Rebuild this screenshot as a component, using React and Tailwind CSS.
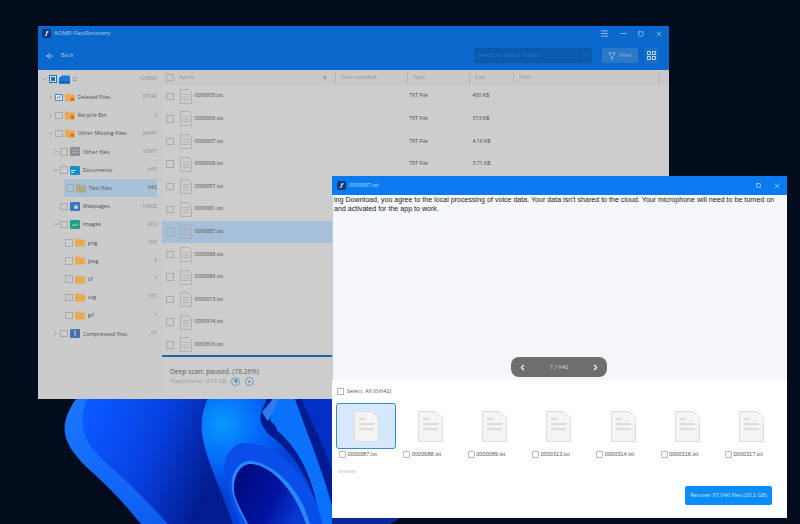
import React from 'react';
import { ArrowLeft, ChevronDown, ChevronLeft, ChevronRight, Menu, Minus, Pause, Play, Search, Square, X, Filter, ArrowUp } from 'lucide-react';

const treeRows = [
  { label: 'C:', count: '123990', depth: 0, open: true, box: 'partial', icon: 'drive' },
  { label: 'Deleted Files', count: '97040', depth: 1, open: false, box: 'checked', icon: 'orange' },
  { label: 'Recycle Bin', count: '3', depth: 1, open: false, icon: 'recycle' },
  { label: 'Other Missing Files', count: '26947', depth: 1, open: true, icon: 'orange' },
  { label: 'Other files', count: '10967', depth: 2, open: false, icon: 'gray' },
  { label: 'Documents', count: '643', depth: 2, open: true, icon: 'docs' },
  { label: 'Text files', count: '642', depth: 3, selected: true, icon: 'tan' },
  { label: 'Webpages', count: '14902', depth: 2, icon: 'web' },
  { label: 'Images', count: '472', depth: 2, open: true, icon: 'images' },
  { label: 'png', count: '363', depth: 3, icon: 'folder' },
  { label: 'jpeg', count: '6', depth: 3, icon: 'folder' },
  { label: 'tif', count: '1', depth: 3, icon: 'folder' },
  { label: 'svg', count: '101', depth: 3, icon: 'folder' },
  { label: 'gif', count: '1', depth: 3, icon: 'folder' },
  { label: 'Compressed files', count: '61', depth: 2, open: false, icon: 'zip' },
];

const fileRows = [
  { name: '0000005.txt', type: 'TXT File', size: '450 KB' },
  { name: '0000006.txt', type: 'TXT File', size: '313 KB' },
  { name: '0000007.txt', type: 'TXT File', size: '4.16 KB' },
  { name: '0000008.txt', type: 'TXT File', size: '3.71 KB' },
  { name: '0000057.txt' },
  { name: '0000081.txt' },
  { name: '0000087.txt', selected: true },
  { name: '0000088.txt' },
  { name: '0000089.txt' },
  { name: '0000313.txt' },
  { name: '0000314.txt' },
  { name: '0000316.txt' },
];

const thumbs = ['0000087.txt', '0000088.txt', '0000089.txt', '0000313.txt', '0000314.txt', '0000316.txt', '0000317.txt'];

function Wallpaper() {
  return (
    <svg className="absolute inset-0" width="800" height="524" viewBox="0 0 800 524">
      <defs>
        <linearGradient id="outer" x1="0" y1="0" x2="1" y2="1">
          <stop offset="0" stopColor="#1a78ff" />
          <stop offset="1" stopColor="#0a50e8" />
        </linearGradient>
        <linearGradient id="petal" gradientUnits="userSpaceOnUse" x1="90" y1="420" x2="215" y2="470">
          <stop offset="0" stopColor="#0a58ff" />
          <stop offset="0.5" stopColor="#0840e0" />
          <stop offset="1" stopColor="#021c90" />
        </linearGradient>
        <radialGradient id="fold" gradientUnits="userSpaceOnUse" cx="222" cy="424" r="70">
          <stop offset="0" stopColor="#0a98ff" />
          <stop offset="0.55" stopColor="#0568f8" />
          <stop offset="1" stopColor="#0440d8" />
        </radialGradient>
        <linearGradient id="inner" gradientUnits="userSpaceOnUse" x1="236" y1="480" x2="300" y2="510">
          <stop offset="0" stopColor="#000a80" />
          <stop offset="0.6" stopColor="#0214a0" />
          <stop offset="1" stopColor="#0838d0" />
        </linearGradient>
      </defs>
      <path d="M78 396 C68 410 63 422 65 434 C67 446 78 460 92 472 C112 490 128 508 141 524 L332 524 L332 396 Z" fill="url(#outer)" />
      <path d="M88 396 C83 408 81 420 84 432 C88 446 100 458 114 470 C134 488 152 506 168 524 L332 524 L332 396 Z" fill="url(#petal)" />
      <path d="M300 396 L332 396 L332 470 C322 440 310 420 300 396 Z" fill="#0230c4" />
      <path d="M272 396 L294 396 C304 426 320 462 332 506 L332 524 L320 524 C314 470 292 440 270 425 Z" fill="#0a72fa" />
      <path d="M209 396 C203 408 201 420 202 432 C204 456 224 496 233 524 L322 524 C312 480 292 450 268 434 C262 426 258 420 262 410 L268 396 Z" fill="url(#fold)" />
      <path d="M262 412 L274 398 L278 400 L268 422 Z" fill="#2f7cf0" />
      <path d="M261 418 C263 426 268 431 273 437 L277 429 C274 423 270 420 267 420 Z" fill="#02188c" />
      <path d="M224 470 C224 456 232 444 244 443 C268 442 296 462 310 490 C316 502 320 514 323 524 L240 524 C232 504 226 486 224 470 Z" fill="#0a4eea" />
      <path d="M232 490 C230 474 238 461 250 461 C270 462 292 482 303 505 C306 512 308 518 310 524 L246 524 C240 512 234 502 232 490 Z" fill="#2a88ff" />
      <path d="M234 492 C233 476 240 464 251 464 C268 465 288 484 299 507 C302 513 304 519 306 524 L248 524 C242 512 236 502 234 492 Z" fill="url(#inner)" />
      <path d="M332 518 L400 518 L390 524 L332 524 Z" fill="#062a9a" />
    </svg>
  );
}

function Box({ state, className = '' }) {
  if (state === 'checked') {
    return (
      <span className={`flex h-[7.5px] w-[7.5px] shrink-0 items-center justify-center border border-[#4f8fc4] bg-[#dbe6ef] ${className}`}>
        <svg width="6" height="6" viewBox="0 0 6 6"><path d="M1 3l1.4 1.4L5 1.6" fill="none" stroke="#2f6fa8" strokeWidth="1" /></svg>
      </span>
    );
  }
  if (state === 'partial') {
    return (
      <span className={`flex h-[7.5px] w-[7.5px] shrink-0 items-center justify-center border border-[#1f74b8] bg-[#dbe6ef] ${className}`}>
        <span className="block h-[4.5px] w-[4.5px] bg-[#1a6cb0]" />
      </span>
    );
  }
  return <span className={`block h-[7.5px] w-[7.5px] shrink-0 border border-[#a9a9a9] ${className}`} />;
}

function TreeIcon({ kind }) {
  if (kind === 'drive') {
    return (
      <svg width="11" height="9" viewBox="0 0 11 9" className="shrink-0">
        <path d="M0 8.5V3L3 .5h6.5c.8 0 1.5.7 1.5 1.5v6.5Z" fill="#1a7ad8" />
        <rect x="0" y="6.5" width="11" height="2" fill="#0f5eb4" />
      </svg>
    );
  }
  if (kind === 'gray' || kind === 'docs' || kind === 'web' || kind === 'images' || kind === 'zip') {
    const fills = { gray: '#8b8f96', docs: '#1790c8', web: '#3a78c4', images: '#1ba083', zip: '#4b70a8' };
    return (
      <svg width="10" height="9" viewBox="0 0 10 9" className="shrink-0">
        <rect width="10" height="9" rx="1" fill={fills[kind]} />
        {kind === 'gray' && <path d="M1.5 3h7M1.5 5.5h7" stroke="#b6b8bc" strokeWidth=".8" />}
        {kind === 'docs' && <path d="M1 4.5h4.5M1 6.5h3" stroke="#e6f4fa" strokeWidth=".9" />}
        {kind === 'web' && <circle cx="6" cy="5" r="2" fill="#b9d2ee" />}
        {kind === 'images' && <path d="M2 6.5l1.5-2 1.5 1.3L7 3.5l1 1.5" fill="none" stroke="#e2f5ef" strokeWidth=".7" />}
        {kind === 'zip' && <path d="M5 1v6" stroke="#b9c8de" strokeWidth="1.2" />}
      </svg>
    );
  }
  return (
    <svg width="10" height="9" viewBox="0 0 10 9" className="shrink-0">
      <path d="M0 1.2C0 .7.4.4.8.4h2.6l1 1H9.2c.5 0 .8.3.8.8v5.6c0 .5-.3.8-.8.8H.8C.4 8.6 0 8.3 0 7.8Z" fill={kind === 'tan' ? '#b0a888' : '#e9a94f'} />
      {(kind === 'orange' || kind === 'recycle') && <rect x="5.5" y="4.5" width="3.5" height="3.5" rx="1.5" fill="#d9692c" />}
    </svg>
  );
}

function TreeRow({ row }) {
  const indent = { 0: 'pl-[3px]', 1: 'pl-[9px]', 2: 'pl-[14px]', 3: 'pl-[18px]' };
  return (
    <div className={`flex h-[18.2px] items-center pr-[5px] ${indent[row.depth]}`}>
      {row.depth === 3 ? (
        <span className="w-[8px] shrink-0" />
      ) : row.open ? (
        <ChevronDown size={7} strokeWidth={2} className="w-[7px] shrink-0 text-[#808080]" />
      ) : row.open === false ? (
        <ChevronRight size={7} strokeWidth={2} className="w-[7px] shrink-0 text-[#808080]" />
      ) : (
        <span className="w-[7px] shrink-0" />
      )}
      <div className={`flex h-[18.2px] min-w-0 flex-1 items-center ${row.selected ? 'bg-[#a9c1d8]' : ''}`}>
        <Box state={row.box} className={row.selected ? 'ml-[2px] border-[#7fa2c2]' : 'ml-[1px]'} />
        <span className="ml-[2px]"><TreeIcon kind={row.icon} /></span>
        <span className="ml-[3px] flex-1 truncate font-['Open_Sans',sans-serif] text-[5.6px] text-[#4d5156]">{row.label}</span>
        <span className={`font-['Open_Sans',sans-serif] text-[5.2px] ${row.selected ? 'text-[#555]' : 'text-[#8b8b8b]'}`}>{row.count}</span>
      </div>
    </div>
  );
}

function FileIcon() {
  return (
    <svg width="12" height="15" viewBox="0 0 12 15" className="shrink-0">
      <path d="M.5.5h8l3 3v11H.5Z" fill="none" stroke="#a8a8a8" strokeWidth=".8" />
      <path d="M2.5 5.5h7M2.5 8h7M2.5 10.5h7" stroke="#a8a8a8" strokeWidth=".7" />
    </svg>
  );
}

function FileRow({ row }) {
  return (
    <div className={`flex h-[22.6px] items-center font-['Open_Sans',sans-serif] text-[5.2px] text-[#484848] ${row.selected ? 'bg-[#a5bfd8]' : ''}`}>
      <Box className={row.selected ? 'ml-[4px] border-[#4f7ea8]' : 'ml-[4px]'} />
      <span className="ml-[6px]"><FileIcon /></span>
      <span className="ml-[3px] w-[215px]">{row.name}</span>
      <span className="w-[63px]">{row.type}</span>
      <span>{row.size}</span>
    </div>
  );
}

function MainWindow() {
  return (
    <div className="absolute left-[38px] top-[26px] flex h-[373px] w-[631px] flex-col bg-[#cdcdcd]">
      <div className="flex h-[44px] flex-col bg-[#0a68cc] text-[#b8d4f0]">
        <div className="flex h-[15px] items-center px-[4px]">
          <span className="flex h-[9px] w-[9px] items-center justify-center rounded-[2px] bg-[#0d3a78] text-[6px] font-bold italic text-white">f</span>
          <span className="ml-[3px] flex-1 font-['Open_Sans',sans-serif] text-[5.9px] text-[#b0cdea]">AOMEI FastRecovery</span>
          <Menu size={9} strokeWidth={1.6} className="mr-[10px] text-[#dceaf8]" />
          <Minus size={9} strokeWidth={1.6} className="mr-[10px] text-[#dceaf8]" />
          <Square size={6} strokeWidth={2} className="mr-[11px] text-[#dceaf8]" />
          <X size={8} strokeWidth={1.6} className="mr-[2px] text-[#dceaf8]" />
        </div>
        <div className="flex flex-1 items-center pl-[7px] pr-[11px]">
          <ArrowLeft size={10} strokeWidth={1.6} className="text-[#e4eff9]" />
          <span className="ml-[6px] flex-1 font-['Open_Sans',sans-serif] text-[5.6px] text-[#a8c8e8]">Back</span>
          <div className="flex h-[15px] w-[118px] items-center justify-between bg-[#0a5aae] pl-[3px] pr-[4px]">
            <span className="font-['Open_Sans',sans-serif] text-[5.4px] text-[#2f78c4]">Search for files or folders</span>
            <Search size={7} strokeWidth={1} className="text-[#4a8ccc]" />
          </div>
          <div className="ml-[10px] flex h-[15px] w-[36px] items-center justify-center gap-[3px] bg-[#2a78c6]">
            <Filter size={8} strokeWidth={1.5} className="text-[#dceaf8]" />
            <span className="font-['Open_Sans',sans-serif] text-[5.4px] text-[#8fbce6]">Filter</span>
          </div>
          <div className="ml-[7px] flex h-[15px] w-[13px] items-center justify-center bg-[#1c70c4]">
            <svg width="9" height="9" viewBox="0 0 9 9">
              <path d="M.5.5h3v3h-3zM5.5.5h3v3h-3zM.5 5.5h3v3h-3zM5.5 5.5h3v3h-3z" fill="none" stroke="#e4eff9" strokeWidth=".8" />
            </svg>
          </div>
        </div>
      </div>
      <div className="flex min-h-0 flex-1">
        <div className="w-[124px] shrink-0 bg-[#cbcbcb]">
          {treeRows.map((row) => <TreeRow key={row.label} row={row} />)}
        </div>
        <div className="flex min-w-0 flex-1 flex-col bg-[#cdcdcd]">
          <div className="flex h-[15px] items-center bg-[#c9c9c9] font-['Open_Sans',sans-serif] text-[5.4px] text-[#969696]">
            <Box className="ml-[4px]" />
            <span className="ml-[5.5px] w-[143px]">Name</span>
            <ArrowUp size={6} strokeWidth={2.5} className="text-[#707070]" />
            <span className="ml-[7px] h-[11px] w-[72px] border-l border-[#b5b5b5] pl-[5px] leading-[11px]">Date modified</span>
            <span className="h-[11px] w-[62px] border-l border-[#b5b5b5] pl-[5px] leading-[11px]">Type</span>
            <span className="h-[11px] w-[44px] border-l border-[#b5b5b5] pl-[5px] leading-[11px]">Size</span>
            <span className="h-[11px] w-[147px] border-l border-r border-[#b5b5b5] pl-[5px] leading-[11px]">Path</span>
          </div>
          <div className="h-[270px] overflow-hidden">
            {fileRows.map((row) => <FileRow key={row.name} row={row} />)}
          </div>
          <div className="h-[1.5px] bg-[#1c66ad]" />
          <div className="flex-1 pl-[8px] pt-[10px]">
            <div className="font-['Open_Sans',sans-serif] text-[6.7px] leading-[10px] text-[#5e6268]">Deep scan: paused. (78.26%)</div>
            <div className="flex items-center gap-[4px] font-['Open_Sans',sans-serif] text-[5.6px] text-[#9a9a9a]">
              <span className="w-[56px] whitespace-nowrap">File(s) found : 20.8 GB</span>
              <span className="ml-[1px] flex h-[9px] w-[9px] items-center justify-center rounded-full border border-[#6f9ecb]"><Pause size={4} className="text-[#3f7fb8]" fill="#3f7fb8" /></span>
              <span className="ml-[1px] flex h-[9px] w-[9px] items-center justify-center rounded-full border border-[#6f9ecb]"><Play size={3} className="text-[#3f7fb8]" fill="#3f7fb8" /></span>
            </div>
          </div>
        </div>
      </div>
    </div>
  );
}

function Thumb({ name, active }) {
  return (
    <div className="flex w-[60px] flex-col">
      <div className={`flex h-[46px] w-[60px] items-center justify-center rounded-[3px] ${active ? 'border border-[#3d8ac8] bg-[#d6e8fb]' : ''}`}>
        <svg width="25" height="31" viewBox="0 0 25 31">
          <path d="M.5.5h17.5l6.5 6.5v23.5H.5Z" fill="#f4f4f2" stroke="#dcdcdc" />
          <path d="M5 8h6M5 13h15M5 18h15" stroke="#c4c4c4" strokeWidth="1" />
        </svg>
      </div>
      <div className="mt-[1px] flex items-center pl-[3px] font-['Liberation_Sans',sans-serif] text-[5.6px] text-[#555]">
        <span className="mr-[1.5px] block h-[7px] w-[7px] shrink-0 rounded-[1px] border border-[#b5b5b5]" />
        <span className="whitespace-nowrap">{name}</span>
      </div>
    </div>
  );
}

function PreviewWindow() {
  return (
    <div className="absolute left-[332px] top-[176px] flex h-[342px] w-[455px] flex-col bg-white">
      <div className="flex h-[19px] items-center bg-[#0a7bef] px-[5px]">
        <span className="flex h-[9px] w-[9px] items-center justify-center rounded-[2px] bg-[#0d3a78] text-[6px] font-bold italic text-white">f</span>
        <span className="ml-[3px] flex-1 font-['Open_Sans',sans-serif] text-[5.4px] text-[#bfe0ff]">0000087.txt</span>
        <Square size={5} strokeWidth={2.5} className="mr-[12px] text-white" />
        <X size={8} strokeWidth={1.5} className="mr-[1px] text-white" />
      </div>
      <div className="relative h-[185px] border-l border-[#b7cfe6] bg-[#f5f7fa] px-[1px] pt-[1px]">
        <p className="max-w-[442px] font-['Liberation_Sans',sans-serif] text-[7.1px] leading-[9px] text-[#222]">
          ing Download, you agree to the local processing of voice data. Your data isn't shared to the cloud. Your microphone will need to be turned on and activated for the app to work.
        </p>
        <div className="absolute bottom-[3px] left-[178px] flex h-[20px] w-[96px] items-center justify-between rounded-[8px] bg-[#6e6e6e] px-[7px] text-white">
          <ChevronLeft size={9} strokeWidth={3} />
          <span className="font-['Open_Sans',sans-serif] text-[6px] text-[#d8d8d8]">7 / 642</span>
          <ChevronRight size={9} strokeWidth={3} />
        </div>
      </div>
      <div className="flex items-center pl-[5px] pt-[7px] font-['Open_Sans',sans-serif] text-[5.6px] text-[#555]">
        <span className="mr-[3px] block h-[7px] w-[7px] border border-[#b5b5b5]" />
        Select&nbsp; All (0/642)
      </div>
      <div className="mt-[8px] flex justify-between pl-[4px] pr-[5px]">
        {thumbs.map((name, i) => <Thumb key={name} name={name} active={i === 0} />)}
      </div>
      <div className="ml-[6px] mt-[11px] h-[3px] w-[18px] bg-[#e4e4e4]" />
      <div className="mt-[13px] flex justify-end pr-[15px]">
        <button className="h-[19px] w-[87px] rounded-[2px] bg-[#0a8bf5] font-['Open_Sans',sans-serif] text-[5.6px] text-[#cfe8ff]">Recover 97,040 files (20.2 GB)</button>
      </div>
    </div>
  );
}

export default function App() {
  return (
    <div className="relative h-[524px] w-[800px] overflow-hidden bg-[#020c1c]">
      <Wallpaper />
      <MainWindow />
      <PreviewWindow />
    </div>
  );
}
